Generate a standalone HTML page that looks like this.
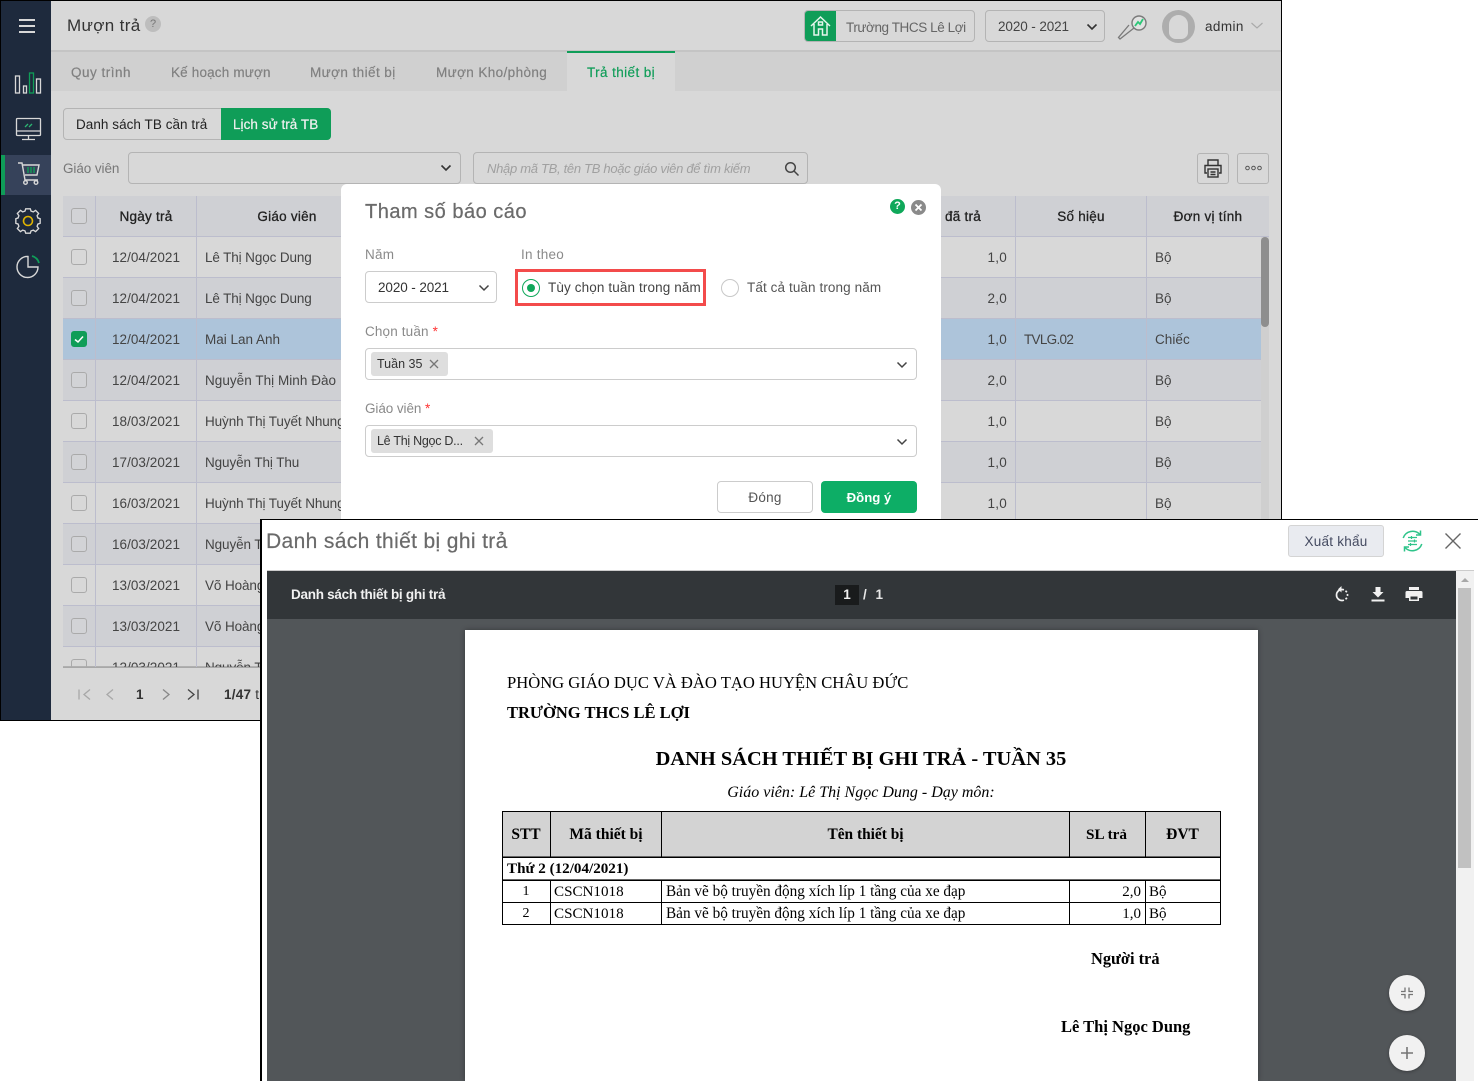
<!DOCTYPE html>
<html lang="vi"><head><meta charset="utf-8"><title>Mượn trả</title>
<style>
html,body{margin:0;padding:0;background:#fff}
body{width:1478px;height:1081px;position:relative;overflow:hidden;font-family:"Liberation Sans","DejaVu Sans",sans-serif;font-size:13.5px;letter-spacing:.25px;color:#444}
div,span,svg{box-sizing:border-box}
.a,.t{position:absolute}
.t{white-space:nowrap;line-height:20px;height:20px;margin-top:1px}
.b{font-weight:bold}
.c{text-align:center}
.r{text-align:right}
.box{position:absolute;border:1px solid #b4b4b4;border-radius:4px}
.row{position:absolute;left:63px;width:1198px;height:41px;border-bottom:1px solid #bcbdcd}
.l{background:#d8d8d8}.k{background:#cfd0d4}.s{background:#adc4da}
.v{position:absolute;width:1px;background:#bcbdcd;top:196px;height:471px}
.cb{position:absolute;left:71px;width:16px;height:16px;border:1px solid #aaa;border-radius:3px;background:#d8d8d8}
.d{position:absolute;left:80px;width:132px;text-align:center;white-space:nowrap;line-height:20px;margin-top:1px;letter-spacing:.05px}
.n{position:absolute;left:205px;white-space:nowrap;line-height:20px;margin-top:1px;letter-spacing:-.1px}
.q{position:absolute;left:950px;width:57px;text-align:right;line-height:20px;margin-top:1px}
.u{position:absolute;left:1155px;line-height:20px;margin-top:1px;letter-spacing:.05px}
.p{position:absolute;font-family:"Liberation Serif",serif;letter-spacing:0;color:#000;white-space:nowrap;line-height:20px;height:20px;margin-top:1px}
.ln{position:absolute;background:#000}
.tab{color:#808080;-webkit-text-stroke:.2px #808080}
.hd{color:#222;-webkit-text-stroke:.3px #222}
</style></head><body>

<!-- back window -->
<div class="a" style="left:0;top:0;width:1282px;height:721px;background:#d8d8d8;border:1px solid #000"></div>
<div class="a" style="left:1px;top:1px;width:50px;height:719px;background:#1e2a3d"></div>
<svg class="a" style="left:1px;top:1px" width="50" height="150" fill="none" stroke="#d8d8d8" stroke-width="1.300">
<path d="M18 19h16M18 25h16M18 31h16" stroke-width="2"/>
<rect x="14.500" y="75" width="4" height="17"/><rect x="22.500" y="85" width="3" height="7"/><rect x="28.500" y="72" width="4" height="20" stroke="#0f9d58"/><rect x="35.500" y="78" width="4" height="14"/>
<rect x="15.500" y="117.500" width="24" height="17" rx="1"/><path d="M15.500 130h24M27.500 135v3M21 138.500h13"/><path d="M24 126l3-3M28 126l3-3" stroke="#2bb673"/>
</svg>
<div class="a" style="left:1px;top:155px;width:50px;height:40px;background:#36425a"></div>
<div class="a" style="left:1px;top:155px;width:4px;height:40px;background:#0f9d58"></div>
<svg class="a" style="left:1px;top:155px" width="50" height="130" fill="none" stroke="#d8d8d8" stroke-width="1.400">
<g transform="translate(0 -2)"><path d="M17 10h4l3 17h13"/><path d="M22 12h16l-2 10H24"/><circle cx="24.500" cy="29.500" r="1.800"/><circle cx="35" cy="29.500" r="1.800"/><path d="M27 14v6M30 14v6M33 14v6" stroke="#0f9d58"/></g>
<path stroke-width="1.800" d="M24 53h6l1 3 3 1 3-2 4 4-2 3 1 3 3 1v6l-3 1-1 3 2 3-4 4-3-2-3 1-1 3h-6l-1-3-3-1-3 2-4-4 2-3-1-3-3-1v-6l3-1 1-3-2-3 4-4 3 2 3-1z" transform="translate(27 66) scale(.76) translate(-27 -69)"/>
<circle cx="27" cy="66" r="4.500" stroke="#e0b400" stroke-width="1.600"/>
<path d="M27 102v10h10a10.500 10.500 0 1 1-10-10.500z"/><path d="M31 101a10 10 0 0 1 7 7" stroke="#0f9d58" stroke-width="1.800"/>
</svg>

<div class="t" style="left:67px;top:15px;font-size:17px;line-height:20px;color:#333;letter-spacing:.35px">Mượn trả</div>
<div class="a" style="left:145px;top:16px;width:16px;height:16px;border-radius:50%;background:#bdbdbd;color:#777;font-size:11px;text-align:center;line-height:16px;letter-spacing:0">?</div>
<div class="a" style="left:51px;top:50px;width:1230px;height:2px;background:#c4c4c4"></div>
<div class="a" style="left:51px;top:52px;width:1230px;height:39px;background:#d0d0d0"></div>
<div class="t tab" style="left:71px;top:62px;letter-spacing:.5px">Quy trình</div>
<div class="t tab" style="left:171px;top:62px;letter-spacing:.17px">Kế hoạch mượn</div>
<div class="t tab" style="left:310px;top:62px;letter-spacing:.42px">Mượn thiết bị</div>
<div class="t tab" style="left:436px;top:62px;letter-spacing:.39px">Mượn Kho/phòng</div>
<div class="a" style="left:567px;top:51px;width:108px;height:40px;background:#d8d8d8;border-top:2px solid #0f9d58"></div>
<div class="t" style="left:587px;top:62px;color:#0f9d58;-webkit-text-stroke:.2px #0f9d58;letter-spacing:.4px">Trả thiết bị</div>

<!-- header right -->
<div class="box" style="left:804px;top:10px;width:171px;height:32px"></div>
<div class="a" style="left:805px;top:11px;width:31px;height:30px;background:#0f9d58;border-radius:3px 0 0 3px"></div>
<svg class="a" style="left:805px;top:11px" width="31" height="30" fill="none" stroke="#e6f5ec" stroke-width="1.500"><path d="M6 15l9.500-9L25 15M9 13v11h4.500v-6h4v6H22V13"/><rect x="13.500" y="11" width="4" height="3"/></svg>
<div class="t" style="left:846px;top:17px;color:#666;letter-spacing:-.42px">Trường THCS Lê Lợi</div>
<div class="box" style="left:985px;top:10px;width:120px;height:32px"></div>
<div class="t" style="left:998px;top:16px;color:#444;letter-spacing:-.1px">2020 - 2021</div>
<svg class="a" style="left:1086px;top:22px" width="12" height="10" fill="none" stroke="#333" stroke-width="1.600"><path d="M1.500 2.500L6 7l4.500-4.500"/></svg>
<svg class="a" style="left:1116px;top:12px" width="32" height="30" fill="none"><circle cx="23" cy="11" r="7" fill="#e2e2e2" stroke="#7a7a7a" stroke-width="1.400"/><path d="M18 16L4 27l-1.500-1.500L13 13" stroke="#7a7a7a" stroke-width="1.300"/><path d="M19 14l3-4 2 2 3-5" stroke="#2bc777" stroke-width="1.800"/></svg>
<div class="a" style="left:1162px;top:10px;width:33px;height:33px;border-radius:50%;background:#adadad"></div>
<div class="a" style="left:1169px;top:15px;width:19px;height:24px;border-radius:10px 10px 7px 7px;background:#d8d8d8"></div>
<div class="t" style="left:1205px;top:16px;color:#333;letter-spacing:.4px">admin</div>
<svg class="a" style="left:1250px;top:21px" width="14" height="10" fill="none" stroke="#aaa" stroke-width="1.200"><path d="M1.500 2L7 7l5.500-5"/></svg>

<!-- toggle -->
<div class="box" style="left:63px;top:108px;width:268px;height:32px"></div>
<div class="t" style="left:76px;top:114px;color:#222;letter-spacing:.05px">Danh sách TB cần trả</div>
<div class="a" style="left:221px;top:108px;width:110px;height:32px;background:#0f9d58;border-radius:0 4px 4px 0"></div>
<div class="t" style="left:233px;top:114px;color:#f0f0f0;-webkit-text-stroke:.2px #f0f0f0;letter-spacing:.05px">Lịch sử trả TB</div>

<div class="t" style="left:63px;top:158px;color:#777;letter-spacing:-.08px">Giáo viên</div>
<div class="box" style="left:128px;top:152px;width:333px;height:32px"></div>
<svg class="a" style="left:440px;top:163px" width="12" height="10" fill="none" stroke="#333" stroke-width="1.600"><path d="M1.500 2.500L6 7l4.500-4.500"/></svg>
<div class="box" style="left:473px;top:152px;width:335px;height:32px"></div>
<div class="t" style="left:487px;top:158px;font-style:italic;color:#a0a0a0;font-size:13px;letter-spacing:-.3px">Nhập mã TB, tên TB hoặc giáo viên để tìm kiếm</div>
<svg class="a" style="left:784px;top:161px" width="16" height="16" fill="none" stroke="#444" stroke-width="1.500"><circle cx="6.500" cy="6.500" r="4.800"/><path d="M10 10l4.500 4.500"/></svg>
<div class="box" style="left:1197px;top:153px;width:32px;height:31px;border-radius:3px"></div>
<svg class="a" style="left:1203px;top:158px" width="20" height="21" fill="none" stroke="#333" stroke-width="1.400"><path d="M5 7V2h10v5M4 15H2V7.500h16V15h-2"/><rect x="5" y="11" width="10" height="8"/><path d="M7.500 14h5M7.500 16.500h5"/></svg>
<div class="box" style="left:1237px;top:153px;width:32px;height:31px;border-radius:3px"></div>
<svg class="a" style="left:1245px;top:165px" width="17" height="6" fill="none" stroke="#555"><circle cx="2.500" cy="3" r="1.800"/><circle cx="8.500" cy="3" r="1.800"/><circle cx="14.500" cy="3" r="1.800"/></svg>

<!-- table -->
<div class="a" style="left:63px;top:196px;width:1206px;height:41px;background:#cfd0d4;border-bottom:1px solid #bcbdcd"></div>
<div class="row l" style="top:237px"></div>
<div class="row k" style="top:278px"></div>
<div class="row s" style="top:319px"></div>
<div class="row k" style="top:360px"></div>
<div class="row l" style="top:401px"></div>
<div class="row k" style="top:442px"></div>
<div class="row l" style="top:483px"></div>
<div class="row k" style="top:524px"></div>
<div class="row l" style="top:565px"></div>
<div class="row k" style="top:606px"></div>
<div class="a" style="left:63px;top:647px;width:1198px;height:20px;background:#d8d8d8;border-bottom:1px solid #b0b0b0"></div>
<div class="a" style="left:1261px;top:237px;width:8px;height:430px;background:#cfcfcf"></div>
<div class="a" style="left:1261px;top:237px;width:8px;height:90px;background:#8e8e8e;border-radius:4px"></div>
<div class="v" style="left:95px"></div><div class="v" style="left:196px"></div><div class="v" style="left:1015px"></div><div class="v" style="left:1146px"></div>

<div class="t c hd" style="left:96px;top:206px;width:100px">Ngày trả</div>
<div class="t c hd" style="left:197px;top:206px;width:180px">Giáo viên</div>
<div class="t hd" style="left:945px;top:206px">đã trả</div>
<div class="t c hd" style="left:1016px;top:206px;width:130px">Số hiệu</div>
<div class="t c hd" style="left:1147px;top:206px;width:122px">Đơn vị tính</div>

<div class="cb" style="top:208px;background:#d2d3d6"></div>
<div class="cb" style="top:249px"></div><div class="cb" style="top:290px;background:#d2d3d6"></div>
<div class="cb" style="top:331px;background:#0f9d58;border-color:#0f9d58"></div>
<svg class="a" style="left:71px;top:331px" width="16" height="16" fill="none" stroke="#fff" stroke-width="1.500"><path d="M4 8.500l3 2.500 5-5.500"/></svg>
<div class="cb" style="top:372px;background:#d2d3d6"></div><div class="cb" style="top:413px"></div><div class="cb" style="top:454px;background:#d2d3d6"></div><div class="cb" style="top:495px"></div><div class="cb" style="top:536px;background:#d2d3d6"></div><div class="cb" style="top:577px"></div><div class="cb" style="top:618px;background:#d2d3d6"></div>
<div class="a" style="left:71px;top:659px;width:16px;height:8px;border:1px solid #aaa;border-bottom:0;border-radius:3px 3px 0 0"></div>

<div class="d" style="top:247px">12/04/2021</div><div class="n" style="top:247px;letter-spacing:-.12px">Lê Thị Ngọc Dung</div><div class="q" style="top:247px">1,0</div><div class="u" style="top:247px">Bộ</div>
<div class="d" style="top:288px">12/04/2021</div><div class="n" style="top:288px;letter-spacing:-.12px">Lê Thị Ngọc Dung</div><div class="q" style="top:288px">2,0</div><div class="u" style="top:288px">Bộ</div>
<div class="d" style="top:329px">12/04/2021</div><div class="n" style="top:329px;letter-spacing:0">Mai Lan Anh</div><div class="q" style="top:329px">1,0</div><div class="t" style="left:1024px;top:329px;letter-spacing:-.7px">TVLG.02</div><div class="u" style="top:329px">Chiếc</div>
<div class="d" style="top:370px">12/04/2021</div><div class="n" style="top:370px;letter-spacing:.04px">Nguyễn Thị Minh Đào</div><div class="q" style="top:370px">2,0</div><div class="u" style="top:370px">Bộ</div>
<div class="d" style="top:411px">18/03/2021</div><div class="n" style="top:411px;width:136px;overflow:hidden">Huỳnh Thị Tuyết Nhung</div><div class="q" style="top:411px">1,0</div><div class="u" style="top:411px">Bộ</div>
<div class="d" style="top:452px">17/03/2021</div><div class="n" style="top:452px">Nguyễn Thị Thu</div><div class="q" style="top:452px">1,0</div><div class="u" style="top:452px">Bộ</div>
<div class="d" style="top:493px">16/03/2021</div><div class="n" style="top:493px;width:136px;overflow:hidden">Huỳnh Thị Tuyết Nhung</div><div class="q" style="top:493px">1,0</div><div class="u" style="top:493px">Bộ</div>
<div class="d" style="top:534px">16/03/2021</div><div class="n" style="top:534px">Nguyễn Thị</div>
<div class="d" style="top:575px">13/03/2021</div><div class="n" style="top:575px">Võ Hoàng</div>
<div class="d" style="top:616px">13/03/2021</div><div class="n" style="top:616px">Võ Hoàng</div>
<div class="a" style="left:63px;top:655px;width:300px;height:12px;overflow:hidden"><div class="d" style="top:2px;left:17px">12/03/2021</div><div class="n" style="top:2px;left:142px">Nguyễn Thị</div></div>
<div class="a" style="left:63px;top:667px;width:1198px;height:1px;background:#a8a8a8"></div>

<!-- pager -->
<svg class="a" style="left:76px;top:686px" width="125" height="18" fill="none" stroke="#a8a8a8" stroke-width="1.300"><path d="M3 3.500v10M14 3.500L8 8.500l6 5M37 3.500L31 8.500l6 5"/><path d="M87 3.500l6 5-6 5" stroke="#888"/><path d="M112 3.500l6 5-6 5" stroke="#444"/><path d="M122 3.500v10" stroke="#444"/></svg>
<div class="t b" style="left:136px;top:684px;color:#333">1</div>
<div class="t" style="left:224px;top:684px;color:#333"><b>1/47</b> t</div>

<!-- modal -->
<div class="a" style="left:341px;top:184px;width:600px;height:336px;background:#fff;border-radius:6px 6px 0 0"></div>
<div class="t" style="left:365px;top:201px;font-size:20px;color:#6b6b6b;letter-spacing:.5px;-webkit-text-stroke:.25px #6b6b6b">Tham số báo cáo</div>
<div class="a" style="left:890px;top:199px;width:15px;height:15px;border-radius:50%;background:#0fa85a;color:#fff;font-size:11px;font-weight:bold;text-align:center;line-height:15px;letter-spacing:0">?</div>
<div class="a" style="left:911px;top:200px;width:15px;height:15px;border-radius:50%;background:#8a8a8a"></div>
<svg class="a" style="left:911px;top:200px" width="15" height="15" stroke="#fff" stroke-width="1.800"><path d="M4.500 4.500l6 6M10.500 4.500l-6 6"/></svg>

<div class="t" style="left:365px;top:244px;color:#8a8a8a">Năm</div>
<div class="t" style="left:521px;top:244px;color:#8a8a8a">In theo</div>
<div class="box" style="left:365px;top:271px;width:132px;height:32px;border-color:#ccc"></div>
<div class="t" style="left:378px;top:277px;color:#333;letter-spacing:-.1px">2020 - 2021</div>
<svg class="a" style="left:478px;top:283px" width="12" height="10" fill="none" stroke="#444" stroke-width="1.500"><path d="M1.500 2.500L6 7l4.500-4.500"/></svg>
<div class="a" style="left:515px;top:269px;width:191px;height:37px;border:3px solid #f34b4b"></div>
<div class="a" style="left:522px;top:279px;width:18px;height:18px;border-radius:50%;border:1px solid #0fa85a"></div>
<div class="a" style="left:527px;top:284px;width:8px;height:8px;border-radius:50%;background:#0fa85a"></div>
<div class="t" style="left:548px;top:277px;color:#444;letter-spacing:.12px">Tùy chọn tuần trong năm</div>
<div class="a" style="left:721px;top:279px;width:18px;height:18px;border-radius:50%;border:1px solid #c8c8c8"></div>
<div class="t" style="left:747px;top:277px;color:#555;letter-spacing:.1px">Tất cả tuần trong năm</div>

<div class="t" style="left:365px;top:321px;color:#8a8a8a;letter-spacing:.15px">Chọn tuần <span style="color:#f33">*</span></div>
<div class="box" style="left:365px;top:348px;width:552px;height:32px;border-color:#ccc"></div>
<div class="a" style="left:371px;top:352px;width:77px;height:24px;background:#dedede;border-radius:3px"></div>
<div class="t" style="left:377px;top:353px;font-size:12.500px;letter-spacing:0;color:#333">Tuần 35</div>
<svg class="a" style="left:428px;top:358px" width="12" height="12" stroke="#777" stroke-width="1.300"><path d="M2 2l8 8M10 2l-8 8"/></svg>
<svg class="a" style="left:896px;top:360px" width="12" height="10" fill="none" stroke="#444" stroke-width="1.500"><path d="M1.500 2.500L6 7l4.500-4.500"/></svg>

<div class="t" style="left:365px;top:398px;color:#8a8a8a;letter-spacing:-.08px">Giáo viên <span style="color:#f33">*</span></div>
<div class="box" style="left:365px;top:425px;width:552px;height:32px;border-color:#ccc"></div>
<div class="a" style="left:371px;top:429px;width:122px;height:24px;background:#dedede;border-radius:3px"></div>
<div class="t" style="left:377px;top:430px;font-size:12.500px;letter-spacing:-.27px;color:#333">Lê Thị Ngọc D...</div>
<svg class="a" style="left:473px;top:435px" width="12" height="12" stroke="#777" stroke-width="1.300"><path d="M2 2l8 8M10 2l-8 8"/></svg>
<svg class="a" style="left:896px;top:437px" width="12" height="10" fill="none" stroke="#444" stroke-width="1.500"><path d="M1.500 2.500L6 7l4.500-4.500"/></svg>

<div class="box c" style="left:717px;top:481px;width:96px;height:32px;border-color:#ccc;line-height:32px;color:#555">Đóng</div>
<div class="a b c" style="left:821px;top:481px;width:96px;height:32px;background:#0dae66;border-radius:4px;color:#fff;line-height:34px;letter-spacing:0;font-size:13.200px">Đồng ý</div>

<!-- front window -->
<div class="a" style="left:260px;top:519px;width:1218px;height:562px;background:#fff;border-left:2px solid #000;border-top:1px solid #000"></div>
<div class="t" style="left:266px;top:530px;font-size:21px;line-height:22px;height:22px;color:#6a6a6a;letter-spacing:.36px;-webkit-text-stroke:.2px #6a6a6a">Danh sách thiết bị ghi trả</div>
<div class="a c" style="left:1288px;top:525px;width:96px;height:32px;background:#e9ebf0;border:1px solid #d4d4d4;border-radius:3px;line-height:32px;color:#444a60">Xuất khẩu</div>
<svg class="a" style="left:1400px;top:529px" width="25" height="24" fill="none" stroke="#2fc48a" stroke-width="1.500"><path d="M3.200 9A10 10 0 0 1 20 5.500M21.800 15A10 10 0 0 1 5 18.500"/><path d="M20.500 1.500v4.500h-4.500M4.500 22.500V18h4.500"/><path d="M8 8.500h9M8 12h9M8 15.500h9" stroke-width="1.200"/><path d="M11.500 7v3M14.500 10.500v3M10.500 14v3" stroke-width="1.200"/></svg>
<svg class="a" style="left:1444px;top:532px" width="18" height="18" stroke="#666" stroke-width="1.400"><path d="M1.500 1.500l15 15M16.500 1.500l-15 15"/></svg>

<!-- pdf viewer -->
<div class="a" style="left:267px;top:570px;width:1207px;height:1px;background:#ccc"></div>
<div class="a" style="left:267px;top:571px;width:1189px;height:510px;background:#525659"></div>
<div class="a" style="left:267px;top:571px;width:1189px;height:48px;background:#323639"></div>
<div class="t" style="left:291px;top:584px;color:#f1f1f1;font-size:13.500px;letter-spacing:-.27px;font-weight:bold">Danh sách thiết bị ghi trả</div>
<div class="a c" style="left:835px;top:585px;width:24px;height:20px;background:#191b1c;color:#f1f1f1;font-weight:bold;line-height:20px;letter-spacing:0">1</div>
<div class="t" style="left:863px;top:584px;color:#e8e8e8;font-weight:bold;letter-spacing:0;word-spacing:5px">/ 1</div>
<svg class="a" style="left:1333px;top:585px" width="20" height="20" fill="none" stroke="#f1f1f1" stroke-width="1.700"><path d="M9 4.500A5.500 5.500 0 0 0 9 15.500"/><path d="M9 15.500A5.500 5.500 0 0 0 9 4.500" stroke-dasharray="2 1.800"/><path d="M8.500 1v6.500L5 4.300z" fill="#f1f1f1" stroke="none"/></svg>
<svg class="a" style="left:1369px;top:585px" width="18" height="18" fill="#f1f1f1"><path d="M6.500 2h5v5h3L9 12.500 3.500 7h3zM2.500 14.500h13V16.500h-13z"/></svg>
<svg class="a" style="left:1405px;top:586px" width="18" height="17" fill="#f1f1f1"><path d="M4 1h10v3H4zM2 5h14a1.500 1.500 0 0 1 1.500 1.500V12H14v3H4v-3H.5V6.500A1.500 1.500 0 0 1 2 5zM5.500 10.500v3h7v-3z"/></svg>
<div class="a" style="left:1456px;top:571px;width:18px;height:510px;background:#f1f1f1"></div>
<div class="a" style="left:1458px;top:588px;width:13px;height:280px;background:#c1c1c1"></div>
<div class="a" style="left:1461px;top:578px;width:0;height:0;border-left:4px solid transparent;border-right:4px solid transparent;border-bottom:4px solid #a8a8a8"></div>

<!-- paper -->
<div class="a" style="left:465px;top:630px;width:793px;height:451px;background:#fff;box-shadow:0 0 5px rgba(0,0,0,.35)"></div>
<div class="p" style="left:507px;top:672px;font-size:16.600px">PHÒNG GIÁO DỤC VÀ ĐÀO TẠO HUYỆN CHÂU ĐỨC</div>
<div class="p b" style="left:507px;top:702px;font-size:16.500px">TRƯỜNG THCS LÊ LỢI</div>
<div class="p b c" style="left:502px;top:746px;width:718px;font-size:20.450px;line-height:24px;height:24px">DANH SÁCH THIẾT BỊ GHI TRẢ - TUẦN 35</div>
<div class="p c" style="left:502px;top:782px;width:718px;font-size:16px;font-style:italic">Giáo viên: Lê Thị Ngọc Dung - Dạy môn:</div>

<div class="a" style="left:502px;top:811px;width:719px;height:46px;background:#d3d3d3"></div>
<div class="ln" style="left:502px;top:811px;width:719px;height:1px"></div>
<div class="ln" style="left:502px;top:856px;width:719px;height:1px;background:#666"></div>
<div class="ln" style="left:502px;top:857px;width:719px;height:1px"></div>
<div class="ln" style="left:502px;top:879px;width:719px;height:1px;background:#666"></div>
<div class="ln" style="left:502px;top:880px;width:719px;height:1px"></div>
<div class="ln" style="left:502px;top:902px;width:719px;height:1px"></div>
<div class="ln" style="left:502px;top:924px;width:719px;height:1px"></div>
<div class="ln" style="left:502px;top:811px;width:1px;height:114px"></div>
<div class="ln" style="left:1220px;top:811px;width:1px;height:114px"></div>
<div class="ln" style="left:550px;top:811px;width:1px;height:46px"></div><div class="ln" style="left:550px;top:880px;width:1px;height:45px"></div>
<div class="ln" style="left:661px;top:811px;width:1px;height:46px"></div><div class="ln" style="left:661px;top:880px;width:1px;height:45px"></div>
<div class="ln" style="left:1069px;top:811px;width:1px;height:46px"></div><div class="ln" style="left:1069px;top:880px;width:1px;height:45px"></div>
<div class="ln" style="left:1145px;top:811px;width:1px;height:46px"></div><div class="ln" style="left:1145px;top:880px;width:1px;height:45px"></div>

<div class="p b c" style="left:503px;top:824px;width:46px;font-size:15.500px">STT</div>
<div class="p b c" style="left:551px;top:824px;width:110px;font-size:15.500px">Mã thiết bị</div>
<div class="p b c" style="left:662px;top:824px;width:407px;font-size:15.400px">Tên thiết bị</div>
<div class="p b c" style="left:1069px;top:824px;width:75px;font-size:15.200px">SL trả</div>
<div class="p b c" style="left:1146px;top:824px;width:73px;font-size:15.500px">ĐVT</div>
<div class="p b" style="left:507px;top:858px;font-size:15.100px">Thứ 2 (12/04/2021)</div>
<div class="p c" style="left:503px;top:881px;width:46px;font-size:14px">1</div>
<div class="p" style="left:554px;top:881px;font-size:15.100px">CSCN1018</div>
<div class="p" style="left:666px;top:881px;font-size:15.250px">Bản vẽ bộ truyền động xích líp 1 tầng của xe đạp</div>
<div class="p r" style="left:1070px;top:881px;width:71px;font-size:15px">2,0</div>
<div class="p" style="left:1149px;top:881px;font-size:15px">Bộ</div>
<div class="p c" style="left:503px;top:903px;width:46px;font-size:14px">2</div>
<div class="p" style="left:554px;top:903px;font-size:15.100px">CSCN1018</div>
<div class="p" style="left:666px;top:903px;font-size:15.250px">Bản vẽ bộ truyền động xích líp 1 tầng của xe đạp</div>
<div class="p r" style="left:1070px;top:903px;width:71px;font-size:15px">1,0</div>
<div class="p" style="left:1149px;top:903px;font-size:15px">Bộ</div>
<div class="p b" style="left:1091px;top:948px;font-size:16.400px">Người trả</div>
<div class="p b" style="left:1061px;top:1016px;font-size:16.500px">Lê Thị Ngọc Dung</div>

<!-- fab -->
<div class="a" style="left:1389px;top:975px;width:36px;height:36px;border-radius:50%;background:#f1f1f1;box-shadow:0 1px 3px rgba(0,0,0,.3)"></div>
<svg class="a" style="left:1389px;top:975px" width="36" height="36" fill="none" stroke="#757575" stroke-width="1.300"><path d="M16 12.500v4h-4M20 12.500v4h4M16 23.500v-4h-4M20 23.500v-4h4"/></svg>
<div class="a" style="left:1389px;top:1035px;width:36px;height:36px;border-radius:50%;background:#f1f1f1;box-shadow:0 1px 3px rgba(0,0,0,.3)"></div>
<svg class="a" style="left:1389px;top:1035px" width="36" height="36" fill="none" stroke="#757575" stroke-width="1.600"><path d="M18 12v12M12 18h12"/></svg>
</body></html>
